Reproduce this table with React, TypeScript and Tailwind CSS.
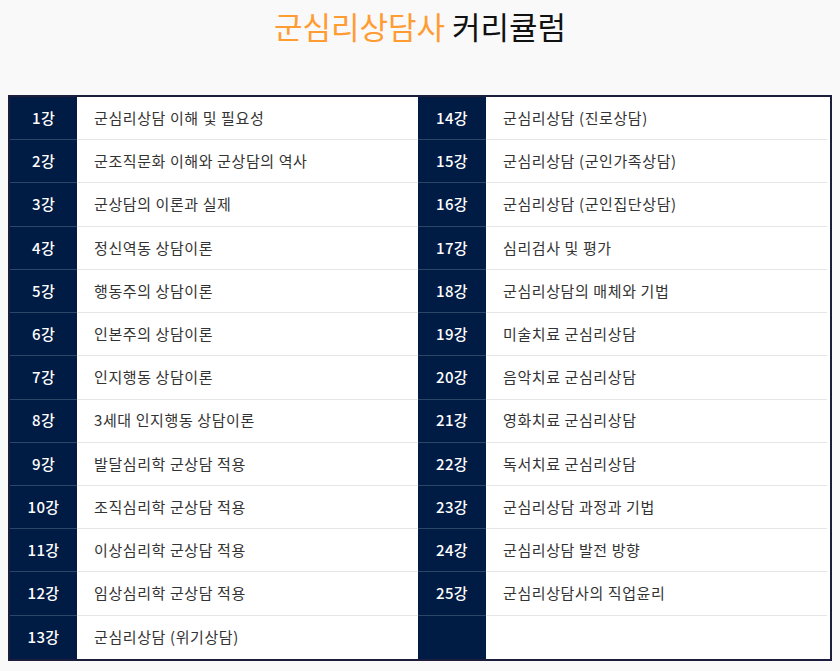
const left = [
  "군심리상담 이해 및 필요성",
  "군조직문화 이해와 군상담의 역사",
  "군상담의 이론과 실제",
  "정신역동 상담이론",
  "행동주의 상담이론",
  "인본주의 상담이론",
  "인지행동 상담이론",
  "3세대 인지행동 상담이론",
  "발달심리학 군상담 적용",
  "조직심리학 군상담 적용",
  "이상심리학 군상담 적용",
  "임상심리학 군상담 적용",
  "군심리상담 (위기상담)",
];

const right = [
  "군심리상담 (진로상담)",
  "군심리상담 (군인가족상담)",
  "군심리상담 (군인집단상담)",
  "심리검사 및 평가",
  "군심리상담의 매체와 기법",
  "미술치료 군심리상담",
  "음악치료 군심리상담",
  "영화치료 군심리상담",
  "독서치료 군심리상담",
  "군심리상담 과정과 기법",
  "군심리상담 발전 방향",
  "군심리상담사의 직업윤리",
];

const font = { fontFamily: '"Noto Sans CJK KR", "Noto Sans", sans-serif' };

const App = () => {
  return (
    <div className="min-h-screen w-[840px] bg-[#f9f9f9] pb-[10px]" style={font}>
      <div className="h-[95px] pt-[4px] flex justify-center">
        <h1 className="text-[31px] leading-[44px]">
          <span className="text-[#ff9c33]">군심리상담사</span>
          <span className="text-[#111]"> 커리큘럼</span>
        </h1>
      </div>

      <div className="mx-2 border-2 border-[#1c1c3c] bg-white">
        <div className="grid grid-cols-[67px_341px_68px_341px] grid-rows-[repeat(13,43.23px)]">
          {left.map((item, i) => {
            const last = i === left.length - 1;
            const r = right[i];
            const navy = `bg-[#001b44] text-white text-[15px] font-medium tracking-[0.3px] flex items-center justify-center ${last ? "" : "border-b border-[#2c4668]"}`;
            const cell = `text-[#333] text-[15px] tracking-[0.6px] flex items-center pl-[17px] ${last ? "" : "border-b border-[#e6e6e6]"}`;
            return [
              <div key={`ln${i}`} className={navy}>{i + 1}강</div>,
              <div key={`lt${i}`} className={cell}>{item}</div>,
              <div key={`rn${i}`} className={navy}>{r ? `${i + 14}강` : ""}</div>,
              <div key={`rt${i}`} className={cell}>{r ?? ""}</div>,
            ];
          })}
        </div>
      </div>
    </div>
  );
};

export default App;
